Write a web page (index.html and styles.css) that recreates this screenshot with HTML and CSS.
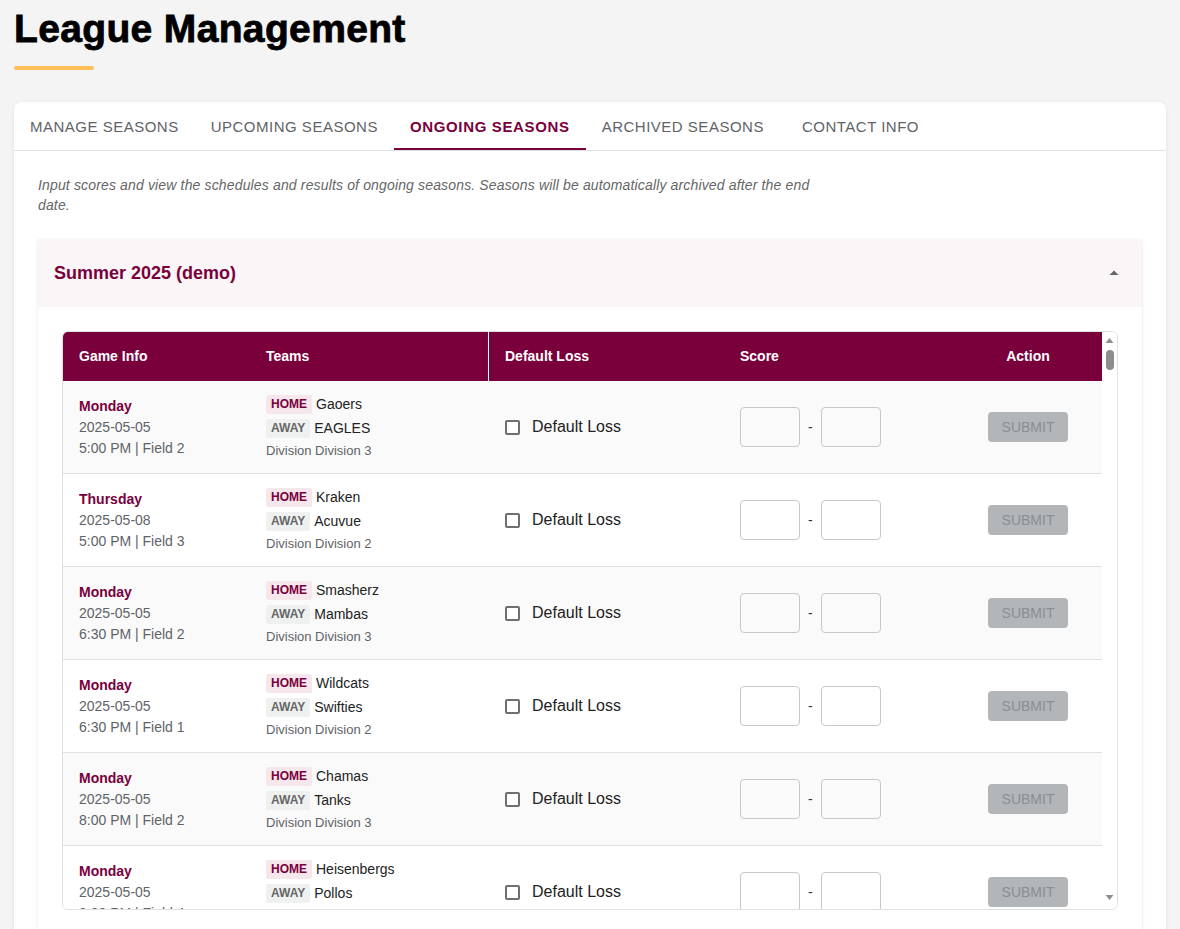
FILE: index.html
```html
<!DOCTYPE html>
<html lang="en">
<head>
<meta charset="utf-8">
<title>League Management</title>
<link rel="stylesheet" href="styles.css">
</head>
<body>
<div class="page">
  <header class="page-head">
    <h1 class="page-title">League Management</h1>
    <div class="title-bar"></div>
  </header>

  <section class="card">
    <nav class="tabs">
      <a class="tab">Manage Seasons</a>
      <a class="tab">Upcoming Seasons</a>
      <a class="tab active">Ongoing Seasons</a>
      <a class="tab">Archived Seasons</a>
      <a class="tab tab-last">Contact Info</a>
    </nav>

    <div class="card-body">
      <p class="desc">Input scores and view the schedules and results of ongoing seasons. Seasons will be automatically archived after the end date.</p>

      <div class="accordion">
        <div class="acc-head">
          <h2 class="acc-title">Summer 2025 (demo)</h2>
          <svg class="acc-icon" width="24" height="24" viewBox="0 0 24 24"><path d="M7.5 14l4.5-4.5 4.5 4.5z" fill="#666"/></svg>
        </div>
        <div class="acc-body">
          <div class="table-frame">
            <div class="table-viewport">
              <table class="games">
                <colgroup>
                  <col class="c-info"><col class="c-teams"><col class="c-default"><col class="c-score"><col class="c-action">
                </colgroup>
                <thead>
                  <tr>
                    <th>Game Info</th>
                    <th>Teams</th>
                    <th class="th-div">Default Loss</th>
                    <th>Score</th>
                    <th class="th-center">Action</th>
                  </tr>
                </thead>
                <tbody>
                  <tr>
                    <td><div class="day">Monday</div><div class="meta">2025-05-05</div><div class="meta">5:00 PM | Field 2</div></td>
                    <td><div class="team"><span class="badge home">HOME</span><span class="tname">Gaoers</span></div><div class="team"><span class="badge away">AWAY</span><span class="tname">EAGLES</span></div><div class="division">Division Division 3</div></td>
                    <td><label class="dl"><input type="checkbox" class="cb"><span>Default Loss</span></label></td>
                    <td><div class="score"><input class="sc" type="text"><span class="dash">-</span><input class="sc" type="text"></div></td>
                    <td class="td-center"><button class="submit" disabled>Submit</button></td>
                  </tr>
                  <tr>
                    <td><div class="day">Thursday</div><div class="meta">2025-05-08</div><div class="meta">5:00 PM | Field 3</div></td>
                    <td><div class="team"><span class="badge home">HOME</span><span class="tname">Kraken</span></div><div class="team"><span class="badge away">AWAY</span><span class="tname">Acuvue</span></div><div class="division">Division Division 2</div></td>
                    <td><label class="dl"><input type="checkbox" class="cb"><span>Default Loss</span></label></td>
                    <td><div class="score"><input class="sc" type="text"><span class="dash">-</span><input class="sc" type="text"></div></td>
                    <td class="td-center"><button class="submit" disabled>Submit</button></td>
                  </tr>
                  <tr>
                    <td><div class="day">Monday</div><div class="meta">2025-05-05</div><div class="meta">6:30 PM | Field 2</div></td>
                    <td><div class="team"><span class="badge home">HOME</span><span class="tname">Smasherz</span></div><div class="team"><span class="badge away">AWAY</span><span class="tname">Mambas</span></div><div class="division">Division Division 3</div></td>
                    <td><label class="dl"><input type="checkbox" class="cb"><span>Default Loss</span></label></td>
                    <td><div class="score"><input class="sc" type="text"><span class="dash">-</span><input class="sc" type="text"></div></td>
                    <td class="td-center"><button class="submit" disabled>Submit</button></td>
                  </tr>
                  <tr>
                    <td><div class="day">Monday</div><div class="meta">2025-05-05</div><div class="meta">6:30 PM | Field 1</div></td>
                    <td><div class="team"><span class="badge home">HOME</span><span class="tname">Wildcats</span></div><div class="team"><span class="badge away">AWAY</span><span class="tname">Swifties</span></div><div class="division">Division Division 2</div></td>
                    <td><label class="dl"><input type="checkbox" class="cb"><span>Default Loss</span></label></td>
                    <td><div class="score"><input class="sc" type="text"><span class="dash">-</span><input class="sc" type="text"></div></td>
                    <td class="td-center"><button class="submit" disabled>Submit</button></td>
                  </tr>
                  <tr>
                    <td><div class="day">Monday</div><div class="meta">2025-05-05</div><div class="meta">8:00 PM | Field 2</div></td>
                    <td><div class="team"><span class="badge home">HOME</span><span class="tname">Chamas</span></div><div class="team"><span class="badge away">AWAY</span><span class="tname">Tanks</span></div><div class="division">Division Division 3</div></td>
                    <td><label class="dl"><input type="checkbox" class="cb"><span>Default Loss</span></label></td>
                    <td><div class="score"><input class="sc" type="text"><span class="dash">-</span><input class="sc" type="text"></div></td>
                    <td class="td-center"><button class="submit" disabled>Submit</button></td>
                  </tr>
                  <tr>
                    <td><div class="day">Monday</div><div class="meta">2025-05-05</div><div class="meta">8:00 PM | Field 4</div></td>
                    <td><div class="team"><span class="badge home">HOME</span><span class="tname">Heisenbergs</span></div><div class="team"><span class="badge away">AWAY</span><span class="tname">Pollos</span></div><div class="division">Division Division 2</div></td>
                    <td><label class="dl"><input type="checkbox" class="cb"><span>Default Loss</span></label></td>
                    <td><div class="score"><input class="sc" type="text"><span class="dash">-</span><input class="sc" type="text"></div></td>
                    <td class="td-center"><button class="submit" disabled>Submit</button></td>
                  </tr>
                </tbody>
              </table>
            </div>
            <div class="vscroll" aria-hidden="true">
              <svg class="vs-arrow" width="15" height="15" viewBox="0 0 15 15"><path d="M3.5 10h8l-4-5z" fill="#8d8d8d"/></svg>
              <div class="vs-thumb"></div>
              <div class="vs-track"></div>
              <svg class="vs-arrow" width="15" height="15" viewBox="0 0 15 15"><path d="M3.5 5h8l-4 5z" fill="#8d8d8d"/></svg>
            </div>
          </div>
        </div>
      </div>
    </div>
  </section>
</div>
</body>
</html>
```
FILE: styles.css
```css
html, body {
  margin: 0;
  padding: 0;
  height: 100%;
  overflow: hidden;
  background: #f4f4f4;
  font-family: "Liberation Sans", Arial, sans-serif;
  color: #222;
}

.page {
  padding: 6px 14px 0;
}

.page-title {
  margin: 0;
  font-size: 39px;
  line-height: 46px;
  font-weight: 700;
  letter-spacing: 0.35px;
  color: #000;
  -webkit-text-stroke: 0.8px #000;
}

.title-bar {
  width: 80px;
  height: 4px;
  margin-top: 14px;
  border-radius: 2px;
  background: #fdbf57;
}

.card {
  margin-top: 32px;
  background: #fff;
  border-radius: 8px;
  box-shadow: 0 1px 4px rgba(0, 0, 0, 0.08);
  min-height: 900px;
}

.tabs {
  display: flex;
  height: 48px;
  border-bottom: 1px solid #e0e0e0;
}

.tab {
  display: flex;
  align-items: center;
  padding: 2px 16px 0;
  font-size: 15px;
  letter-spacing: 0.5px;
  text-transform: uppercase;
  color: #5f6368;
  border-bottom: 2px solid transparent;
}

.tab.active {
  color: #7a003c;
  font-weight: 700;
  letter-spacing: 0.65px;
  border-bottom-color: #7a003c;
}

.tab-last {
  margin-left: 6px;
}

.card-body {
  padding: 24px 24px 0;
}

.desc {
  margin: 0 0 24px;
  max-width: 790px;
  font-size: 14px;
  line-height: 20px;
  font-style: italic;
  letter-spacing: 0.15px;
  color: #666;
}

.accordion {
  background: #fff;
  box-shadow: 0 2px 1px -1px rgba(0,0,0,0.12), 0 1px 1px 0 rgba(0,0,0,0.08), 0 1px 4px 0 rgba(0,0,0,0.08);
}

.acc-head {
  display: flex;
  align-items: center;
  justify-content: space-between;
  height: 68px;
  padding: 0 16px;
  background: #faf6f7;
}

.acc-title {
  margin: 0;
  font-size: 18px;
  font-weight: 700;
  color: #7a003c;
}

.acc-icon {
  display: block;
}

.acc-body {
  padding: 24px;
}

.table-frame {
  display: flex;
  height: 579px;
  box-sizing: border-box;
  border: 1px solid #e0e0e0;
  border-radius: 6px;
  overflow: hidden;
}

.table-viewport {
  flex: 1;
  min-width: 0;
  overflow: hidden;
}

.vscroll {
  width: 15px;
  flex: none;
  display: flex;
  flex-direction: column;
  align-items: center;
  background: #fff;
  padding: 1px 0 4px;
}

.vs-arrow {
  display: block;
  flex: none;
}

.vs-thumb {
  width: 8px;
  height: 20px;
  margin-top: 2px;
  border-radius: 4px;
  background: #8d8d8d;
  flex: none;
}

.vs-track {
  flex: 1;
}

.games {
  width: 100%;
  table-layout: fixed;
  border-collapse: separate;
  border-spacing: 0;
}

.c-info { width: 187px; }
.c-teams { width: 238px; }
.c-default { width: 236px; }
.c-score { width: 229px; }
.c-action { width: 150px; }

.games th {
  background: #7a003c;
  color: #fff;
  font-size: 14px;
  font-weight: 700;
  text-align: left;
  height: 49px;
  padding: 0 16px 1px;
  box-sizing: border-box;
}

.games th.th-div {
  border-left: 1px solid #fff;
}

.games th.th-center,
.games td.td-center {
  text-align: center;
}

.games td {
  height: 93px;
  box-sizing: border-box;
  padding: 0 16px;
  border-bottom: 1px solid #e0e0e0;
  vertical-align: middle;
  font-size: 14px;
}

.games tbody tr:nth-child(odd) td {
  background: #fafafa;
}

.games tbody tr:nth-child(even) td {
  background: #fff;
}

.day {
  font-weight: 700;
  color: #7a003c;
  line-height: 21px;
}

.meta {
  color: #5f6368;
  line-height: 21px;
}

.team {
  display: flex;
  align-items: center;
  gap: 4px;
  height: 20px;
  margin-bottom: 4px;
}

.badge {
  display: inline-block;
  padding: 2px 5px;
  font-size: 12px;
  line-height: 15px;
  font-weight: 700;
  border-radius: 2px;
}

.badge.home {
  background: #f6e7ed;
  color: #7a003c;
}

.badge.away {
  background: #eff1f1;
  color: #666;
}

.tname {
  font-size: 14px;
  color: #222;
}

.division {
  margin-top: 1px;
  font-size: 13px;
  line-height: 18px;
  color: #5f6368;
}

.dl {
  display: flex;
  align-items: center;
  font-size: 16px;
  color: #222;
}

.cb {
  appearance: none;
  -webkit-appearance: none;
  width: 15px;
  height: 15px;
  margin: 0 12px 0 1px;
  border: 2px solid #6f6f6f;
  border-radius: 2px;
  background: #fff;
  box-sizing: border-box;
}

.score {
  display: flex;
  align-items: center;
}

.sc {
  width: 60px;
  height: 40px;
  box-sizing: border-box;
  border: 1px solid #c8c8c8;
  border-radius: 4px;
  background: transparent;
  padding: 0 8px;
  font-family: inherit;
  font-size: 14px;
}

.dash {
  margin: 0 8px;
  font-size: 14px;
  color: #333;
}

.submit {
  width: 80px;
  height: 30px;
  border: none;
  border-radius: 4px;
  background: #b2b6b9;
  color: #8a8e92;
  font-family: inherit;
  font-size: 14px;
  text-transform: uppercase;
  padding: 0;
}
```
